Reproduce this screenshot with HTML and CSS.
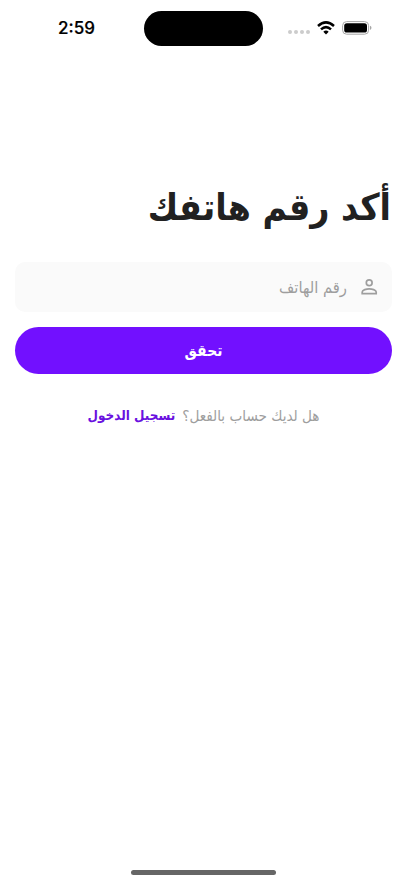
FILE: index.html
```html
<!DOCTYPE html>
<html lang="ar" dir="rtl">
<head>
  <meta charset="UTF-8" />
  <meta name="viewport" content="width=device-width, initial-scale=1.0"/>
  <title>أكد رقم هاتفك</title>
  <link rel="stylesheet" href="styles.css">
</head>
<body>

  <!-- status bar -->
  <header class="status-bar" dir="ltr">
    <span class="time">2:59</span>
    <div class="island"></div>
    <div class="status-icons">
      <div class="dots"><i></i><i></i><i></i><i></i></div>
      <svg class="wifi" width="18" height="14" viewBox="0 0 18 14" fill="none" stroke="#000" stroke-width="2.5">
        <path d="M1 5 Q9 -2.2 17 5"/>
        <path d="M4 8.4 Q9 3.8 14 8.4"/>
        <path d="M9 13.5 L6.3 10.8 Q9 8.4 11.7 10.8 Z" fill="#000" stroke="none"/>
      </svg>
      <svg class="battery" width="30" height="14" viewBox="0 0 30 14">
        <rect x=".6" y=".6" width="26" height="12.6" rx="4" fill="none" stroke="#a6a6a6"/>
        <rect x="2.2" y="2.2" width="22.8" height="9.4" rx="2.6"/>
        <path d="M28 4.7v4.2q1.5-.6 1.5-2.1t-1.5-2.1z" fill="#a6a6a6"/>
      </svg>
    </div>
  </header>

  <main class="content">
    <h1>أكد رقم هاتفك</h1>

    <label class="field">
      <svg width="20" height="20" viewBox="0 0 20 20" fill="none" stroke="#9e9e9e" stroke-width="1.7">
        <circle cx="10.2" cy="5.8" r="2.9"/>
        <path d="M3.2 16.7v-1.6c0-2.2 4.4-3.3 7-3.3s7 1.1 7 3.3v1.6z"/>
      </svg>
      <span>رقم الهاتف</span>
    </label>

    <button class="verify">تحقق</button>

    <p class="login"><span>هل لديك حساب بالفعل؟</span><a>تسجيل الدخول</a></p>
  </main>

  <div class="home-bar"></div>
</body>
</html>
```
FILE: styles.css
```css
* {
  box-sizing: border-box;
}

body {
  margin: 0;
  height: 883px;
  background: #fff;
  font-family: 'DejaVu Sans', 'DejaVu Sans Condensed', sans-serif;
  font-stretch: condensed;
  display: flex;
  flex-direction: column;
  overflow: hidden;
}

.status-bar {
  height: 56px;
  padding: 0 35.5px 0 58px;
  display: grid;
  grid-template-columns: 86px 119px 1fr;
  align-items: center;
}

.time {
  font: 500 17px Inter, sans-serif;
  -webkit-text-stroke: .2px #000;
}

.island {
  height: 35px;
  background: #000;
  border-radius: 18px;
}

.status-icons {
  display: flex;
  align-items: center;
  justify-content: flex-end;
  gap: 7px;
}

.dots {
  display: flex;
  gap: 2px;
  padding-top: 8px;
}

.dots i {
  width: 4px;
  height: 4px;
  border-radius: 50%;
  background: #ccc;
}

.content {
  flex: 1;
  padding: 120px 15px 0;
}

h1 {
  margin: 0;
  height: 86px;
  padding-right: 1px;
  line-height: 63px;
  font-size: 37px;
  color: #212121;
  white-space: nowrap;
}

.field {
  height: 50px;
  padding: 0 13px;
  display: flex;
  align-items: center;
  gap: 12px;
  background: #fafafa;
  border-radius: 10px;
  font-size: 16.4px;
  color: #9e9e9e;
}

.verify {
  width: 100%;
  height: 47px;
  margin-top: 15px;
  border: 0;
  border-radius: 24px;
  background: #7210ff;
  color: #fff;
  font-family: inherit;
  font-stretch: inherit;
  font-weight: bold;
  font-size: 15.5px;
}

.login {
  margin: 28px 0 0;
  display: flex;
  justify-content: center;
  gap: 7px;
  font-size: 15.1px;
  line-height: 28px;
  color: #9e9e9e;
  white-space: nowrap;
}

.login a {
  color: #6a11e0;
  font-weight: bold;
  font-size: 13.4px;
}

.home-bar {
  width: 145px;
  height: 5px;
  margin: 0 auto 8px;
  border-radius: 3px;
  background: #666;
}
```
